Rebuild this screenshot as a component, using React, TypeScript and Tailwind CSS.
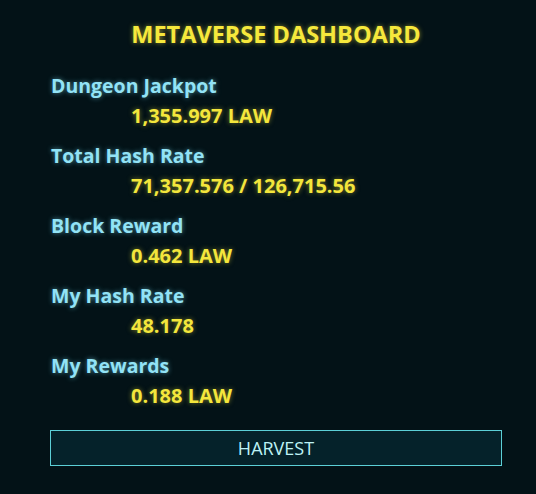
const stats = [
  { label: "Dungeon Jackpot", value: "1,355.997 LAW" },
  { label: "Total Hash Rate", value: "71,357.576 / 126,715.56" },
  { label: "Block Reward", value: "0.462 LAW" },
  { label: "My Hash Rate", value: "48.178" },
  { label: "My Rewards", value: "0.188 LAW" },
];

const App = () => {
  return (
    <div className="min-h-screen w-full bg-[#031217] font-['Open_Sans','Noto_Sans',sans-serif]">
      <div className="w-[452px] ml-[50px] pt-[19px] flex flex-col">
        <h1 className="text-center text-[23.5px] leading-[30px] font-bold text-[#f6e83c] [text-shadow:0_0_5px_rgba(246,232,60,0.55)]">
          METAVERSE DASHBOARD
        </h1>
        <div className="mt-[22px] flex flex-col gap-[10px]">
          {stats.map((s) => (
            <div key={s.label} className="flex flex-col">
              <span className="pl-px text-[19.5px] leading-[30px] font-bold text-[#92e3f6] [text-shadow:0_0_5px_rgba(120,215,240,0.6)]">
                {s.label}
              </span>
              <span className="pl-[81px] text-[20px] leading-[30px] font-bold text-[#f3e63c] [text-shadow:0_0_5px_rgba(243,230,60,0.5)]">
                {s.value}
              </span>
            </div>
          ))}
        </div>
        <button className="mt-[19px] h-[36px] w-full border border-[#5ccfd6] bg-[#05222a] text-[18px] text-[#bdf2f5] font-normal">
          HARVEST
        </button>
      </div>
    </div>
  );
};

export default App;
